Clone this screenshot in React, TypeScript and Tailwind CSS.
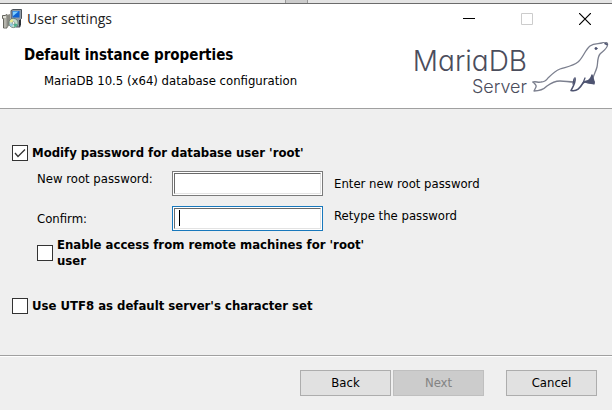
import { useState } from "react";
import type { ReactNode } from "react";

function InstallerIcon() {
  return (
    <svg className="h-5 w-5 shrink-0" viewBox="0 0 20 20" aria-hidden="true">
      <path d="M9 1.500L11 .5h8.500v9L18 11v7h-4v-7H9z" fill="#8f9ba6" stroke="#3c444c" strokeWidth=".9" />
      <path d="M17 11h2v5l-2 2z" fill="#2e3338" />
      <path d="M10.500 2h7v6.500h-7z" fill="#0f63d2" />
      <path d="M11 2.500h5.500L11 7z" fill="#7fd0ff" />
      <path d="M.5 6.500H3L5 5.500V19H1.500V9.500H.5z" fill="#deded6" stroke="#55554e" strokeWidth=".9" />
      <path d="M5 6l3-1v11l-3 2.500z" fill="#8b8b84" />
      <path d="M3 9v9" stroke="#77776f" strokeWidth=".8" />
      <circle cx="11.500" cy="14" r="4.600" fill="#c3dccb" stroke="#5b6f6b" strokeWidth=".8" />
      <path d="M11.500 14L7.500 12.500a4.200 4.200 0 0 1 3-2.700z" fill="#ece88d" />
      <path d="M11.500 14l4 1.200a4.200 4.200 0 0 1-3 3z" fill="#49b08c" />
      <path d="M11.500 14l-1.500 4a4.200 4.200 0 0 1-2.500-3z" fill="#8fc7de" />
      <circle cx="11.500" cy="14" r="1.300" fill="#fff" stroke="#6d7d78" strokeWidth=".6" />
    </svg>
  );
}

function SealDrawing() {
  return (
    <svg className="h-[54px] w-[78px] shrink-0" viewBox="0 0 78 54" fill="none" stroke="#7b7f8e" strokeWidth="1.300" strokeLinejoin="round" strokeLinecap="round" aria-hidden="true">
      <path d="M1 40C4 39 6 41 9 40C12 40 14 39 16 36C20 32 23 29 28 27C34 25 41 24 46 20C51 16 53 8 58 4C62 1 66 2 70 1C73 -.5 76 0 75.500 3C75 7 71 9 68 12C65 16 66 21 65 25C64 29 62 32 61 36" />
      <path d="M1 40C3 42 5 43 4 45L2 49C7 49 12 47 15 44C19 41 23 39 28 39C33 39 37 40 42 40" />
      <path d="M43 36C44 40 41 45 39 48.500C45 50 48 46 51 41C54 38 58 39 62 40" stroke="#4d5370" strokeWidth="1.600" />
      <path d="M42 37L41 42M51 41L53 36" stroke="#4d5370" />
      <path d="M60 33C59 37 57 39 53 40C57 42 60 41 62 42C63 40 61 37 60 33z" fill="#4d5370" stroke="#4d5370" />
      <circle cx="64" cy="6.500" r="1.100" fill="#4d5370" stroke="#4d5370" strokeWidth=".8" />
      <path d="M73 1.500l2 1" stroke="#4d5370" strokeWidth="1.600" />
    </svg>
  );
}

type TickProps = { id: string; checked: boolean; onChange: (v: boolean) => void };

function TickBox({ id, checked, onChange }: TickProps) {
  return (
    <span className="relative h-4 w-4 shrink-0">
      <input
        id={id}
        type="checkbox"
        checked={checked}
        onChange={(e) => onChange(e.target.checked)}
        className="block h-4 w-4 appearance-none border border-[#333] bg-white"
      />
      {checked && (
        <svg className="pointer-events-none absolute inset-0 h-4 w-4" viewBox="0 0 16 16" fill="none" stroke="#333" strokeWidth="1.300" aria-hidden="true">
          <path d="M3 8l3 3.500L13 4.500" />
        </svg>
      )}
    </span>
  );
}

function PasswordBox({ id, active }: { id: string; active?: boolean }) {
  return (
    <span className={active ? "relative border border-[#1878bc] bg-white p-px" : "relative border border-[#7a7a7a] bg-white p-px"}>
      <input
        id={id}
        type="password"
        className="block h-[21px] w-full border border-t-[#696969] border-r-[#e3e3e3] border-b-[#e3e3e3] border-l-[#696969] bg-white px-1 caret-transparent outline-none"
      />
      {active && <span className="absolute top-[3px] left-1.5 h-4 w-px bg-black" />}
    </span>
  );
}

function PushButton({ children, disabled }: { children: ReactNode; disabled?: boolean }) {
  return (
    <button
      type="button"
      disabled={disabled}
      className="h-[26px] w-[91px] border border-[#adadad] bg-[#e1e1e1] text-black disabled:border-[#bfbfbf] disabled:bg-[#cccccc] disabled:text-[#838383]"
    >
      {children}
    </button>
  );
}

export default function App() {
  const [modify, setModify] = useState(true);
  const [remote, setRemote] = useState(false);
  const [utf8, setUtf8] = useState(false);

  return (
    <div className="flex min-h-screen flex-col bg-[#efefef] font-['DejaVu_Sans_Condensed','DejaVu_Sans',sans-serif] text-[13px] leading-4 text-black">
      <div className="flex h-1 justify-center border-b border-[#6b6b6b] bg-[#e4e4e4] pr-5">
        <div className="w-[23px] border-x border-[#999] bg-[#cbcbcb]" />
      </div>
      <header className="border-b border-[#a0a0a0] bg-white">
        <div className="flex h-[30px] items-center pl-0.5">
          <InstallerIcon />
          <h1 className="ml-[5px] flex-1 font-['Open_Sans',sans-serif] text-sm text-[#222]">User settings</h1>
          <button type="button" aria-label="Minimize" className="grid h-[30px] w-[58px] place-items-center">
            <svg className="mr-1 h-3 w-3" viewBox="0 0 12 12" stroke="#000" aria-hidden="true"><path d="M0 5.500h12" /></svg>
          </button>
          <button type="button" aria-label="Maximize" disabled className="grid h-[30px] w-[58px] place-items-center">
            <svg className="mr-1 h-3 w-3" viewBox="0 0 12 12" fill="none" stroke="#ccc" aria-hidden="true"><path d="M.5.5h11v11H.5z" /></svg>
          </button>
          <button type="button" aria-label="Close" className="grid h-[30px] w-[54px] place-items-center">
            <svg className="h-3 w-3" viewBox="0 0 12 12" stroke="#000" strokeWidth="1.200" aria-hidden="true"><path d="M0 0l12 12M12 0L0 12" /></svg>
          </button>
        </div>
        <div className="flex h-[74px] justify-between">
          <div className="pt-[11px] pl-6">
            <h2 className="text-[15px] leading-5 font-bold">Default instance properties</h2>
            <p className="mt-2 pl-5">MariaDB 10.5 (x64) database configuration</p>
          </div>
          <div className="flex items-start">
            <p className="pt-4 text-right font-['Inter',sans-serif] text-[28px] leading-[22px] font-light text-[#4b4d5c] [font-feature-settings:'cv11']">
              MariaDB
              <br />
              <span className="text-lg leading-5">Server</span>
            </p>
            <div className="pt-2 pl-[5px] pr-0.5"><SealDrawing /></div>
          </div>
        </div>
      </header>

      <main className="flex flex-1 flex-col px-3 pt-9">
        <div className="flex items-center gap-1 font-bold">
          <TickBox id="modify" checked={modify} onChange={setModify} />
          <label htmlFor="modify">Modify password for database user 'root'</label>
        </div>
        <div className="mt-2.5 grid grid-cols-[135px_151px_1fr] gap-y-2.5 pl-[25px]">
          <label htmlFor="new-password">New root password:</label>
          <PasswordBox id="new-password" />
          <span className="self-center pl-[11px]">Enter new root password</span>
          <label htmlFor="confirm" className="self-center">Confirm:</label>
          <PasswordBox id="confirm" active />
          <span className="pt-0.5 pl-[11px]">Retype the password</span>
        </div>
        <div className="mt-1.5 flex items-center gap-1 pl-[25px] font-bold">
          <TickBox id="remote" checked={remote} onChange={setRemote} />
          <label htmlFor="remote" className="w-[320px]">Enable access from remote machines for 'root' user</label>
        </div>
        <div className="mt-[29px] flex items-center gap-1 font-bold">
          <TickBox id="utf8" checked={utf8} onChange={setUtf8} />
          <label htmlFor="utf8">Use UTF8 as default server's character set</label>
        </div>
      </main>

      <footer className="flex h-[55px] shrink-0 items-start justify-end gap-0.5 border-t border-[#a0a0a0] pt-3.5 pr-[15px] shadow-[inset_0_1px_0_#fff]">
        <PushButton>Back</PushButton>
        <PushButton disabled>Next</PushButton>
        <div className="ml-5"><PushButton>Cancel</PushButton></div>
      </footer>
    </div>
  );
}
